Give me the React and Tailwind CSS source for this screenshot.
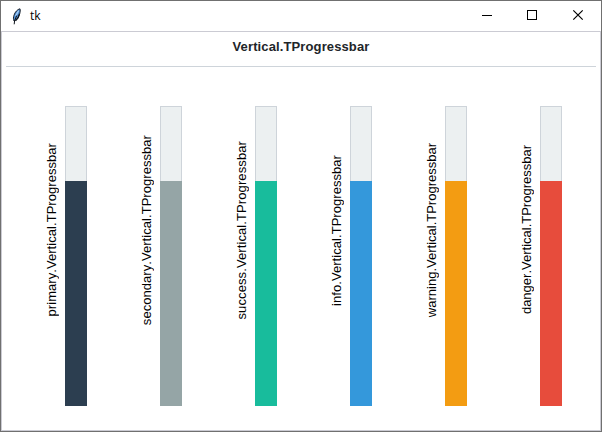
const bars = [
  { name: 'primary', fill: 'bg-[#2c3e50]', tracking: 'tracking-[0.05px]' },
  { name: 'secondary', fill: 'bg-[#95a5a6]', tracking: 'tracking-[0.05px]' },
  { name: 'success', fill: 'bg-[#18bc9c]', tracking: 'tracking-[0.1px]' },
  { name: 'info', fill: 'bg-[#3498db]', tracking: 'tracking-[0.05px]' },
  { name: 'warning', fill: 'bg-[#f39c12]', tracking: 'tracking-normal' },
  { name: 'danger', fill: 'bg-[#e74c3c]', tracking: 'tracking-normal' },
];

function Feather() {
  return (
    <svg width="10" height="17" viewBox="0 0 10 17">
      <path d="M9 .8C6.5 1.3 4 4 3 7.2 2.3 9.3 2.2 11 3 13 5.5 12 7.6 9.5 8.6 6.2 9.3 4 9.4 2 9 .8Z" fill="#4f8fd8" stroke="#1c222b" strokeWidth="1" />
      <path d="M7.6 2.6 4.6 8" stroke="#a9d0f5" strokeWidth="1.2" />
      <path d="M8.4 6 7 10 4.5 12.8" fill="none" stroke="#10151c" strokeWidth="1.3" />
      <path d="M5.8 7.5 3.6 12.5 3.2 16.3" fill="none" stroke="#10151c" strokeWidth="1" />
    </svg>
  );
}

function Progress({ name, fill, tracking }) {
  return (
    <div className="flex w-[95px] items-center justify-end">
      <span
        className={`mr-[6px] mb-[52px] rotate-180 whitespace-nowrap text-[13px] leading-[15px] text-black [writing-mode:vertical-rl] ${tracking}`}
      >
        {name}.Vertical.TProgressbar
      </span>
      <div className="flex h-[300px] w-[22px] flex-col">
        <div className="h-[75px] border border-b-0 border-[#ced4da] bg-[#ecf0f1]" />
        <div className={`h-[225px] ${fill}`} />
      </div>
    </div>
  );
}

export default function App() {
  return (
    <div className="flex h-[432px] w-[602px] flex-col border border-[#707070] bg-white font-['Liberation_Sans',Arial,sans-serif]">
      <header className="flex h-[30px] shrink-0 items-center bg-white pl-[10px]">
        <Feather />
        <span className="ml-[9px] font-['Open_Sans',sans-serif] text-[12px] leading-4 text-black">tk</span>
        <svg className="ml-auto" width="138" height="30" viewBox="0 0 138 30" fill="none" stroke="#000">
          <path d="M19 14.5h10M64.5 9.5h9v9h-9z" shapeRendering="crispEdges" />
          <path d="m110.3 9.3 9.4 9.4m0-9.4-9.4 9.4" strokeWidth="1.2" />
        </svg>
      </header>
      <main className="flex grow flex-col border border-[#cbcbd3]">
        <h1 className="mx-1 h-[35px] border-b border-[#ced4da] pt-[7px] text-center text-[13px] font-bold leading-4 tracking-[0.12px] text-[#212529]">
          Vertical.TProgressbar
        </h1>
        <section className="mt-[39px] flex h-[300px] -ml-[10px]">
          {bars.map((bar) => (
            <Progress key={bar.name} {...bar} />
          ))}
        </section>
      </main>
    </div>
  );
}
